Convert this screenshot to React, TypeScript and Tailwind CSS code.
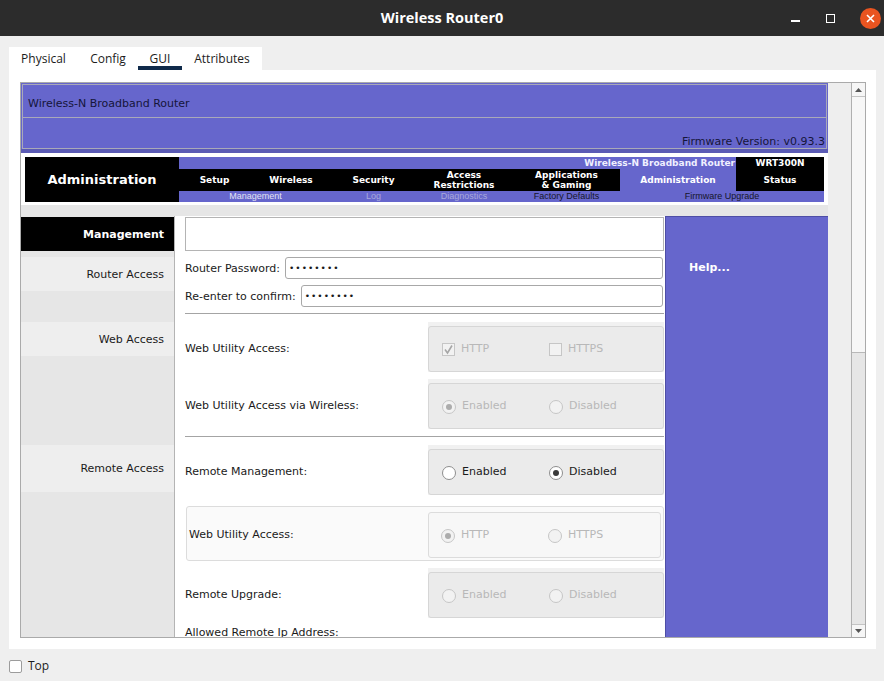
import React from 'react';

const dv = "font-['DejaVu_Sans',sans-serif]";

function Radio({ checked, disabled, label }: { checked?: boolean; disabled?: boolean; label: string }) {
  return (
    <div className="flex w-[107px] items-center gap-[6px]">
      <div
        className={`flex h-[14px] w-[14px] items-center justify-center rounded-full border ${
          disabled ? 'border-[#c6c6c6] bg-[#f2f2f2]' : 'border-[#8e8e8e] bg-white'
        }`}
      >
        {checked && (
          <div className={`h-[6px] w-[6px] rounded-full ${disabled ? 'bg-[#acacac]' : 'bg-[#3a3a3a]'}`} />
        )}
      </div>
      <span className={`text-[11px] ${disabled ? 'text-[#b8b8b8]' : 'text-[#1a1a1a]'}`}>{label}</span>
    </div>
  );
}

function Check({ checked, label }: { checked?: boolean; label: string }) {
  return (
    <div className="flex w-[107px] items-center gap-[6px]">
      <div className="flex h-[13px] w-[13px] items-center justify-center border border-[#c6c6c6] bg-[#f2f2f2]">
        {checked && (
          <svg width="11" height="11" viewBox="0 0 11 11">
            <polyline points="2,5.5 4.5,9 9,1.5" fill="none" stroke="#a6a6a6" strokeWidth="1.6" />
          </svg>
        )}
      </div>
      <span className="text-[11px] text-[#b8b8b8]">{label}</span>
    </div>
  );
}

function OptionRow({ label, children }: { label: string; children: React.ReactNode }) {
  return (
    <div className="flex h-[50px] items-center">
      <div className="flex-1 pt-[4px] text-[11px] text-[#1a1a1a]">{label}</div>
      <div className="h-[50px] w-[236px] bg-[#f1f1f1] pt-[4px]">
        <div className="flex h-[46px] items-center rounded-[3px] border border-[#d6d6d6] bg-[#ebebeb] pl-[13px] pt-[1px]">
          {children}
        </div>
      </div>
    </div>
  );
}

export default function App() {
  const navCols = [
    { name: 'Setup', w: 'w-[71px]' },
    { name: 'Wireless', w: 'w-[82px]' },
    { name: 'Security', w: 'w-[83px]' },
    { name: 'Access\nRestrictions', w: 'w-[98px]' },
    { name: 'Applications\n& Gaming', w: 'w-[107px]' },
  ];

  return (
    <div className="flex h-[681px] w-[884px] flex-col overflow-hidden bg-[#efefef]">
      {/* Title bar */}
      <div className="relative flex h-[36px] shrink-0 items-center justify-center bg-[#2c2c2c]">
        <span className="font-['Open_Sans',sans-serif] text-[14.5px] font-bold text-white">Wireless Router0</span>
        <div className="absolute right-[3px] top-0 flex h-[36px] items-center">
          <div className="mr-[26px] mt-[5px] h-[2px] w-[9px] bg-white" />
          <div className="mr-[25px] h-[9px] w-[9px] border-[1.5px] border-white" />
          <div className="flex h-[21px] w-[21px] items-center justify-center rounded-full bg-[#e95420]">
            <svg width="9" height="9" viewBox="0 0 9 9">
              <path d="M1 1 L8 8 M8 1 L1 8" stroke="white" strokeWidth="1.6" />
            </svg>
          </div>
        </div>
      </div>

      {/* Body */}
      <div className="flex flex-1 flex-col px-[9px] pt-[11px] font-['Open_Sans',sans-serif]">
        {/* Tabs */}
        <div className="flex h-[23px] w-[253px] bg-white text-[12px] text-[#1c1c1c]">
          <div className="flex w-[69px] items-center justify-center">Physical</div>
          <div className="flex w-[60px] items-center justify-center">Config</div>
          <div className="relative flex w-[44px] items-center justify-center">
            GUI
            <div className="absolute bottom-0 left-0 h-[4px] w-[44px] bg-[#0f2a4a]" />
          </div>
          <div className="flex w-[80px] items-center justify-center">Attributes</div>
        </div>

        {/* Panel */}
        <div className="h-[579px] w-[867px] bg-white pl-[11px] pt-[12px]">
          <div className={`flex h-[556px] w-[846px] border border-[#aaaaaa] ${dv}`}>
            {/* viewport */}
            <div className="h-[554px] w-[830px] overflow-hidden bg-[#eeeeee]">
              <div className="w-[807px] bg-[#e6e6e6]">
                {/* Header */}
                <div className="bg-[#6666cc] px-[1px] pt-[1px]">
                  <div className="flex h-[34px] items-center border border-[#a9a9b9] pl-[5px] pt-[6px] text-[11px] text-[#15153a]">
                    Wireless-N Broadband Router
                  </div>
                  <div className="flex h-[31px] items-end justify-end border border-t-0 border-[#a9a9b9] pr-[1px] text-[11px] leading-[13px] text-[#15153a]">
                    Firmware Version: v0.93.3
                  </div>
                  <div className="-mx-[1px] h-[4px] bg-[#5b5bb5]" />
                </div>

                {/* Nav */}
                <div className="bg-white px-[4px] pb-[3px] pt-[4px]">
                  <div className="flex h-[45px]">
                    <div className="flex w-[154px] items-center justify-center bg-black text-[13px] font-bold text-white">
                      Administration
                    </div>
                    <div className="flex w-[645px] flex-col">
                      <div className="flex h-[12px] text-[9px] font-bold leading-[12px] text-[#f0f0ff]">
                        <div className="flex-1 bg-[#6666cc] pr-[1px] text-right">Wireless-N Broadband Router</div>
                        <div className="w-[88px] bg-black text-center text-white">WRT300N</div>
                      </div>
                      <div className="flex h-[22px] text-[9px] font-bold leading-[10px] text-white">
                        {navCols.map((c) => (
                          <div
                            key={c.name}
                            className={`flex ${c.w} items-center justify-center whitespace-pre bg-black text-center`}
                          >
                            {c.name}
                          </div>
                        ))}
                        <div className="flex w-[116px] items-center justify-center bg-[#6666cc]">Administration</div>
                        <div className="flex w-[88px] items-center justify-center bg-black">Status</div>
                      </div>
                      <div className="flex h-[11px] bg-[#6666cc] font-['Liberation_Sans',sans-serif] text-[9px] leading-[11px]">
                        <div className="w-[153px] text-center text-[#e2e2f4]">Management</div>
                        <div className="w-[83px] text-center text-[#a9a9dc]">Log</div>
                        <div className="w-[98px] text-center text-[#a9a9dc]">Diagnostics</div>
                        <div className="w-[107px] text-center text-[#15152a]">Factory Defaults</div>
                        <div className="w-[204px] text-center text-[#15152a]">Firmware Upgrade</div>
                      </div>
                    </div>
                  </div>
                </div>

                <div className="h-[11px] bg-[#e6e6e6]" />

                {/* Main */}
                <div className="flex h-[430px]">
                  {/* sidebar */}
                  <div className="w-[154px] border-r border-[#b4b4b4] bg-[#e6e6e6] pt-[1px] text-right text-[11px]">
                    <div className="flex h-[34px] items-center justify-end bg-black pr-[10px] pt-[2px] font-bold text-white">
                      Management
                    </div>
                    <div className="mt-[6px] flex h-[34px] items-center justify-end bg-[#eeeeee] pr-[10px] pt-[2px] text-[#1a1a1a]">
                      Router Access
                    </div>
                    <div className="mt-[31px] flex h-[34px] items-center justify-end bg-[#eeeeee] pr-[10px] pt-[2px] text-[#1a1a1a]">
                      Web Access
                    </div>
                    <div className="mt-[89px] flex h-[47px] items-center justify-end bg-[#eeeeee] pr-[10px] pt-[2px] text-[#1a1a1a]">
                      Remote Access
                    </div>
                  </div>

                  {/* content */}
                  <div className="w-[490px] bg-white pl-[10px] pr-[1px] pt-[1px] text-[11px] text-[#1a1a1a]">
                    <div className="h-[34px] border border-[#b4b4b4] bg-white" />
                    <div className="mt-[6px] flex h-[22px] items-center gap-[5px] pr-[1px]">
                      <span className="pt-[2px]">Router Password:</span>
                      <div className="flex h-[22px] flex-1 items-center rounded-[3px] border border-[#a8a8a8] pl-[3px] pt-[1px] text-[9px] tracking-[1px]">
                        ••••••••
                      </div>
                    </div>
                    <div className="mt-[6px] flex h-[22px] items-center gap-[5px] pr-[1px]">
                      <span className="pt-[2px]">Re-enter to confirm:</span>
                      <div className="flex h-[22px] flex-1 items-center rounded-[3px] border border-[#a8a8a8] pl-[3px] pt-[1px] text-[9px] tracking-[1px]">
                        ••••••••
                      </div>
                    </div>
                    <div className="mt-[6px] h-px bg-[#a4a4a4]" />

                    <div className="mt-[8px]">
                      <OptionRow label="Web Utility Access:">
                        <Check checked label="HTTP" />
                        <Check label="HTTPS" />
                      </OptionRow>
                    </div>
                    <div className="mt-[7px]">
                      <OptionRow label="Web Utility Access via Wireless:">
                        <Radio checked disabled label="Enabled" />
                        <Radio disabled label="Disabled" />
                      </OptionRow>
                    </div>
                    <div className="mt-[7px] h-px bg-[#a4a4a4]" />
                    <div className="mt-[8px]">
                      <OptionRow label="Remote Management:">
                        <Radio label="Enabled" />
                        <Radio checked label="Disabled" />
                      </OptionRow>
                    </div>

                    <div className="ml-[1px] mt-[11px] flex h-[55px] items-center rounded-[3px] border border-[#dcdcdc] bg-[#fafafa] pb-[2px] pl-[2px] pr-[2px] pt-[5px]">
                      <div className="flex-1">Web Utility Access:</div>
                      <div className="flex h-[46px] w-[233px] items-center rounded-[3px] border border-[#dcdcdc] bg-[#f7f7f7] pl-[12px] pt-[1px]">
                        <Radio checked disabled label="HTTP" />
                        <Radio disabled label="HTTPS" />
                      </div>
                    </div>

                    <div className="mt-[7px]">
                      <OptionRow label="Remote Upgrade:">
                        <Radio disabled label="Enabled" />
                        <Radio disabled label="Disabled" />
                      </OptionRow>
                    </div>
                    <div className="mt-[8px] leading-[14px]">Allowed Remote Ip Address:</div>
                  </div>

                  {/* help */}
                  <div className="w-[163px] border-l border-t border-[#4e4ea6] bg-[#6666cc] pl-[23px] pt-[43px] text-[11px] font-bold text-white">
                    Help...
                  </div>
                </div>
              </div>
            </div>

            {/* scrollbar */}
            <div className="flex w-[14px] flex-col border-l border-[#b0b0b0] bg-[#e6e6e6]">
              <div className="flex h-[14px] items-center justify-center border-b border-[#c4c4c4] bg-[#f6f6f6]">
                <svg width="7" height="4" viewBox="0 0 7 4">
                  <polygon points="0,4 7,4 3.5,0" fill="#555" />
                </svg>
              </div>
              <div className="h-[256px] border-b border-[#b8b8b8] bg-[#f7f7f7]" />
              <div className="flex-1" />
              <div className="flex h-[13px] items-center justify-center border-t border-[#c4c4c4] bg-[#f6f6f6]">
                <svg width="7" height="4" viewBox="0 0 7 4">
                  <polygon points="0,0 7,0 3.5,4" fill="#555" />
                </svg>
              </div>
            </div>
          </div>
        </div>

        {/* Bottom */}
        <div className="mt-[8px] flex items-center gap-[6px]">
          <div className="h-[13px] w-[13px] rounded-[2px] border border-[#9c9c9c] bg-white" />
          <span className="text-[12px] text-[#1c1c1c]">Top</span>
        </div>
      </div>
    </div>
  );
}
